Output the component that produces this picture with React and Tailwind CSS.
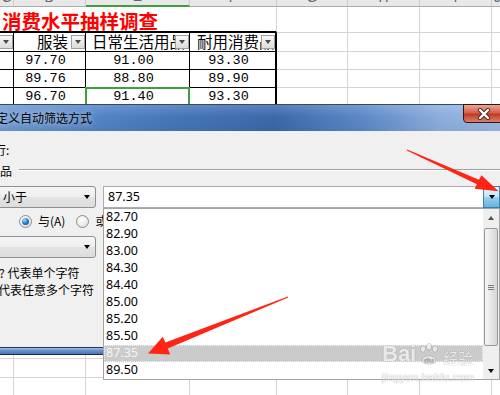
import React from 'react';

const W = ['w-[14px]', 'w-[72px]', 'w-[104px]', 'w-[87px]', 'w-[71px]', 'w-[72px]', 'w-[72px]', 'w-[12px]'];
const LETTERS = ['C', 'D', 'E', 'F', 'G', 'H', 'I', 'J'];
const DATA = [
  ['97.70', '91.00', '93.30'],
  ['89.76', '88.80', '89.90'],
  ['96.70', '91.40', '93.30'],
];
const OPTIONS = ['82.70', '82.90', '83.00', '84.30', '84.40', '85.00', '85.20', '85.50', '87.35', '89.50'];

const cjk = "font-['Noto_Sans_CJK_SC',sans-serif]";
const mono = "font-['Liberation_Mono',monospace]";
const ui = "font-['Noto_Sans','Noto_Sans_CJK_SC',sans-serif]";

function FilterButton() {
  return (
    <span className="relative z-10 w-[14px] h-[14px] shrink-0 flex items-center justify-center border border-[#9f9f9f] bg-[linear-gradient(#f8f8f8,#dcdcdc)]">
      <span className="w-0 h-0 border-x-[3.5px] border-x-transparent border-t-[4px] border-t-[#4a4a4a]" />
    </span>
  );
}

function EmptyCells({ from = 4 }) {
  return W.slice(from).map((w, i) => (
    <div key={i} className={`${w} shrink-0 border-r border-b border-[#d4d4d4]`} />
  ));
}

function Triangle() {
  return <span className="w-0 h-0 border-x-[3.5px] border-x-transparent border-t-[4px] border-t-black" />;
}

function Select({ children }) {
  return (
    <div className="-ml-[4px] w-[100px] h-[22px] shrink-0 flex items-center justify-between rounded-[3px] border border-[#8e8f8f] bg-[linear-gradient(#f6f6f6,#eeeeee_50%,#e4e4e4_50%,#dcdcdc)] pl-[6px] pr-[5px]">
      <span className="leading-none">{children}</span>
      <Triangle />
    </div>
  );
}

function Radio({ checked }) {
  return (
    <span className="w-[13px] h-[13px] shrink-0 rounded-full border border-[#8c8c8c] bg-[radial-gradient(circle_at_40%_35%,#ffffff,#dadada)] flex items-center justify-center">
      {checked && <span className="w-[7px] h-[7px] rounded-full bg-[radial-gradient(circle_at_35%_30%,#9fdcff,#2273bd_55%,#0d3b6c)]" />}
    </span>
  );
}

function SheetTop() {
  return (
    <div className="h-[104px] overflow-hidden bg-white">
      {/* column letters, only their lower edge shows */}
      <div className="flex h-[7px] bg-[#e8e8e8]">
        {LETTERS.map((l, i) => (
          <div
            key={l}
            className={`${W[i]} shrink-0 flex items-end justify-center overflow-hidden border-r border-r-[#cdcdcd] ${i === 2 ? 'border-b-2 border-b-[#3f9f3f]' : 'border-b border-b-[#ababab]'}`}
          >
            <span className="text-[14px] leading-[12px] text-[#666] font-['Liberation_Sans',sans-serif] -translate-y-[3px]">{l}</span>
          </div>
        ))}
      </div>

      <div className="flex h-[26px]">
        <div className="w-[277px] shrink-0 flex items-center pt-[4px] pl-[2px] border-r border-r-[#d4d4d4] border-b-2 border-b-black">
          <span className={`${cjk} text-[19.5px] leading-none font-bold text-[#ff0000] whitespace-nowrap`}>消费水平抽样调查</span>
        </div>
        <EmptyCells />
      </div>

      <div className={`flex h-[19px] ${cjk} text-[15.5px] leading-none`}>
        <div className={`${W[0]} shrink-0 flex items-center justify-end border-r border-b border-black`}>
          <FilterButton />
        </div>
        <div className={`${W[1]} shrink-0 flex items-center justify-end gap-[3px] border-r border-b border-black`}>
          <span>服装</span>
          <FilterButton />
        </div>
        <div className={`${W[2]} shrink-0 flex items-center overflow-hidden border-r border-b border-black`}>
          <span className="w-0 flex-1 whitespace-nowrap pl-[6px]">日常生活用品</span>
          <FilterButton />
        </div>
        <div className={`${W[3]} shrink-0 flex items-center overflow-hidden border-r-2 border-b border-black`}>
          <span className="w-0 flex-1 whitespace-nowrap pl-[7px]">耐用消费品</span>
          <FilterButton />
        </div>
        <EmptyCells />
      </div>

      {DATA.map((row, r) => (
        <div key={r} className={`flex h-[18px] ${mono} text-[13.5px] leading-none text-black`}>
          <div className={`${W[0]} shrink-0 border-r border-b border-black`} />
          {row.map((v, c) => (
            <div
              key={c}
              className={`${W[c + 1]} shrink-0 relative flex items-center justify-center pr-[8px] border-b border-black ${c === 2 ? 'border-r-2' : 'border-r'}`}
            >
              {v}
              {r === 2 && c === 1 && <span className="absolute -left-px -top-px -right-px -bottom-px border-2 border-[#3f9f3f]" />}
            </div>
          ))}
          <EmptyCells />
        </div>
      ))}
    </div>
  );
}

function Dialog() {
  return (
    <div className={`${ui} text-[12px] text-black`}>
      <div className="h-[27px] flex items-start justify-between border-t border-[#34486a] bg-[linear-gradient(180deg,rgba(255,255,255,0.16),rgba(255,255,255,0)_45%,rgba(0,0,0,0.05)),linear-gradient(90deg,#6f9ad3,#5585c6_18%,#4574b6_38%,#3c69aa_55%,#5b88c6_72%,#8caedc_88%,#9ab8e2)]">
        <span className={`${cjk} -ml-[4px] mt-[5px] text-[12px] leading-[16px] whitespace-nowrap [text-shadow:0_0_6px_rgba(255,255,255,0.8)]`}>定义自动筛选方式</span>
        <div className="-mt-px -mr-[4px] w-[41px] h-[19px] flex items-center justify-center rounded-bl-[4px] border border-[#3a120c] bg-[linear-gradient(#e9a596,#d4624d_45%,#c13a22_55%,#d9826d)]">
          <svg width="14" height="12" viewBox="0 0 14 12">
            <path d="M3 2 L11 10 M11 2 L3 10" stroke="#4a2a25" strokeWidth="4.2" strokeLinecap="round" />
            <path d="M3 2 L11 10 M11 2 L3 10" stroke="#ffffff" strokeWidth="2.4" strokeLinecap="round" />
          </svg>
        </div>
      </div>

      <div className="h-[216px] bg-[#f0f0f0] overflow-hidden">
        <div className={`${cjk} h-[18px] mt-[10px] -ml-[6px] leading-[18px]`}>行:</div>
        <div className="h-[16px] mt-[4px] flex items-center">
          <span className={`${cjk} leading-[16px]`}>品</span>
          <span className="flex-1 ml-[7px] -mt-[3px] border-t border-t-[#a0a0a0] border-b border-b-white" />
        </div>
        <div className="mt-[7px] h-[22px] flex">
          <Select><span className={cjk}>小于</span></Select>
          <div className="ml-[7px] flex-1 flex border border-[#abadb3] bg-white">
            <span className="flex-1 pl-[4px] flex items-center text-[12.5px]">87.35</span>
            <span className="w-[17px] -my-px -mr-px flex items-center justify-center border border-[#3c7fb1] bg-[linear-gradient(#e5f4fc,#c4e5f6_50%,#98d1ef_50%,#68b3db)]">
              <Triangle />
            </span>
          </div>
        </div>
        <div className={`${cjk} mt-[5px] h-[16px] flex items-center`}>
          <span className="ml-[19px]"><Radio checked /></span>
          <span className="ml-[6px]">与(A)</span>
          <span className="ml-[11px]"><Radio /></span>
          <span className="ml-[6px]">或(O)</span>
        </div>
        <div className="mt-[7px] h-[22px] flex">
          <Select />
        </div>
        <div className={`${cjk} mt-[7px] h-[16px] leading-[16px] -ml-[1px] whitespace-nowrap`}>? 代表单个字符</div>
        <div className={`${cjk} mt-[1px] h-[16px] leading-[16px] -ml-[2px] whitespace-nowrap`}>代表任意多个字符</div>
      </div>

      <div className="h-[8px] border-t border-t-[#26384f] border-b border-b-[#1d2b3d] bg-[linear-gradient(#a3bfe5,#6790cb_45%,#4a74b6)]" />
    </div>
  );
}

function SheetBottom() {
  return (
    <div className="h-[40px] overflow-hidden bg-white">
      <div className="flex h-[4px]"><EmptyCells from={0} /></div>
      <div className="flex h-[19px]"><EmptyCells from={0} /></div>
      <div className="flex h-[18px]"><EmptyCells from={0} /></div>
    </div>
  );
}

function Scrollbar() {
  return (
    <div className="w-[16px] shrink-0 flex flex-col bg-[#efefef]">
      <div className="h-[17px] flex items-center justify-center">
        <span className="w-0 h-0 border-x-[3.5px] border-x-transparent border-b-[4px] border-b-[#505050]" />
      </div>
      <div className="mt-[2px] mx-[1px] h-[118px] rounded-[2px] border border-[#979797] bg-[linear-gradient(90deg,#f6f6f6,#e6e6e6_50%,#d6d6d6)] flex flex-col items-center justify-center gap-[1px]">
        <span className="w-[6px] h-px bg-[#7a7a7a]" />
        <span className="w-[6px] h-px bg-[#7a7a7a]" />
        <span className="w-[6px] h-px bg-[#7a7a7a]" />
      </div>
      <div className="flex-1" />
      <div className="h-[17px] flex items-center justify-center">
        <Triangle />
      </div>
    </div>
  );
}

function DropList() {
  return (
    <div className={`${ui} absolute left-[103px] top-[208px] w-[397px] h-[172px] flex border border-[#a3a3a3] bg-white`}>
      <div className="flex-1 flex flex-col">
        {OPTIONS.map((o, i) => (
          <div
            key={o}
            className={`h-[17px] shrink-0 pl-[2px] flex items-center text-[12.5px] leading-none ${i === 8 ? 'bg-[#cbcbcb] text-[#f4f4f4] outline-1 outline-dotted -outline-offset-1 outline-[#f2f2f2]' : 'text-black'}`}
          >
            {o}
          </div>
        ))}
      </div>
      <Scrollbar />
    </div>
  );
}

function Arrows() {
  return (
    <svg className="absolute left-0 top-0 pointer-events-none" width="500" height="395" viewBox="0 0 500 395">
      <polygon
        fill="#ff2414"
        points="407.2,149.5 478.9,179.7 481.5,175.2 498.5,191.2 474.6,188.8 476.9,184.3 406.8,150.5"
      />
      <polygon
        fill="#ff2414"
        points="288.2,297.6 167.7,348.6 170.2,354.6 148,353.5 162.8,336.8 165.4,342.6 287.8,296.4"
      />
    </svg>
  );
}

function Watermark() {
  return (
    <div className="absolute left-[382px] top-[343px] pointer-events-none text-white opacity-60 [text-shadow:0_0_1px_#8a8a8a,0_0_1px_#8a8a8a]">
      <div className="flex items-end">
        <span className="font-['Liberation_Sans',sans-serif] text-[22px] font-bold leading-none">Bai</span>
        <svg width="24" height="22" viewBox="0 0 24 22" className="mx-[1px]">
          <g fill="#ffffff" stroke="#9a9a9a" strokeWidth="0.8">
            <ellipse cx="6" cy="6" rx="2.6" ry="3.3" />
            <ellipse cx="12" cy="3.8" rx="2.6" ry="3.3" />
            <ellipse cx="18" cy="6" rx="2.6" ry="3.3" />
            <path d="M5 18 C5 11 19 11 19 18 C19 22 5 22 5 18 Z" />
          </g>
          <text x="12" y="19.5" textAnchor="middle" fontSize="8" fontWeight="bold" fill="#9a9a9a" fontFamily="Liberation Sans">du</text>
        </svg>
        <span className={`${cjk} text-[15px] leading-none ml-[1px]`}>经验</span>
      </div>
      <div className="font-['Liberation_Sans',sans-serif] text-[11px] leading-none mt-[7px] tracking-[0.2px]">jingyan.baidu.com</div>
    </div>
  );
}

export default function App() {
  return (
    <div className="relative w-[500px] h-[395px] overflow-hidden bg-white">
      <SheetTop />
      <Dialog />
      <SheetBottom />
      <DropList />
      <Watermark />
      <Arrows />
    </div>
  );
}
